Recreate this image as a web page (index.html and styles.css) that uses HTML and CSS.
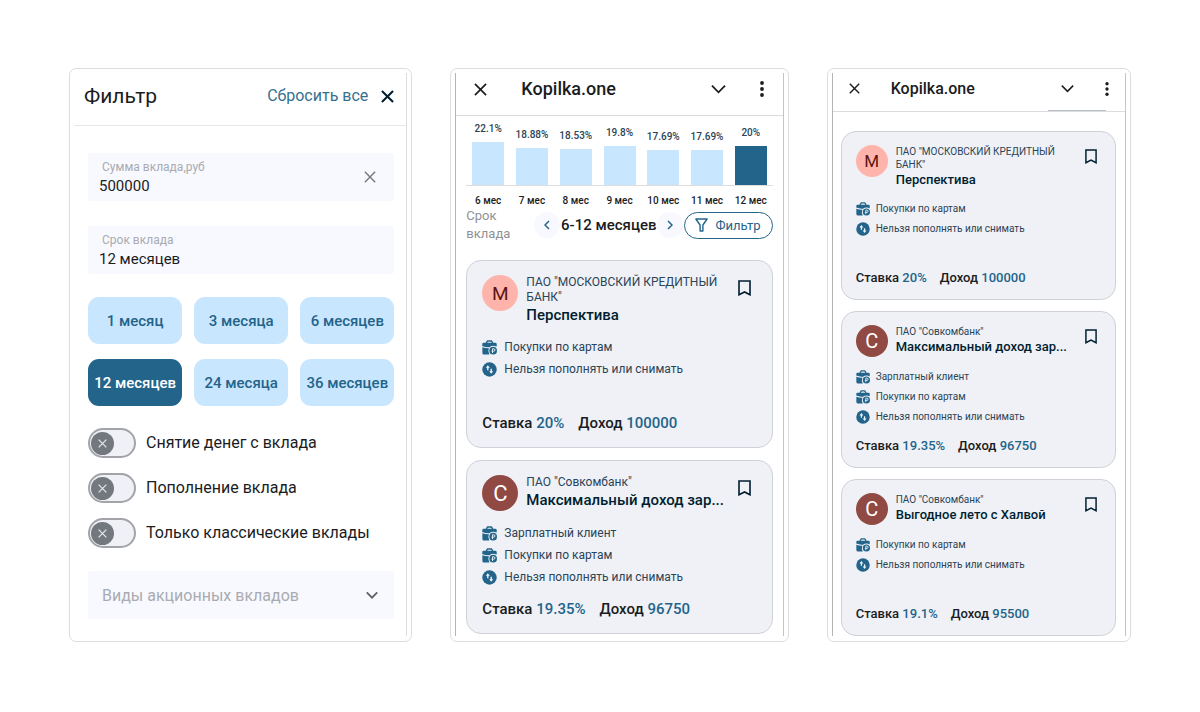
FILE: index.html
```html
<!DOCTYPE html>
<html lang="ru">
<head>
<meta charset="utf-8">
<meta name="viewport" content="width=device-width, initial-scale=1">
<title>Kopilka.one</title>
<link rel="stylesheet" href="styles.css">
</head>
<body>
<svg class="sprite" aria-hidden="true">
  <symbol id="i-close" viewBox="0 0 14 14"><path d="M1 1l12 12M13 1L1 13" fill="none" stroke="currentColor"/></symbol>
  <symbol id="i-down" viewBox="0 0 16 10"><path d="M1 1.5l7 7 7-7" fill="none" stroke="currentColor"/></symbol>
  <symbol id="i-dots" viewBox="0 0 4 16"><g fill="currentColor"><circle cx="2" cy="2" r="1.9"/><circle cx="2" cy="8" r="1.9"/><circle cx="2" cy="14" r="1.9"/></g></symbol>
  <symbol id="i-left" viewBox="0 0 6 10"><path d="M5 1L1 5l4 4" fill="none" stroke="currentColor" stroke-width="1.5"/></symbol>
  <symbol id="i-right" viewBox="0 0 6 10"><path d="M1 1l4 4-4 4" fill="none" stroke="currentColor" stroke-width="1.5"/></symbol>
  <symbol id="i-funnel" viewBox="0 0 13 14"><path d="M.9 1h11.2L7.9 7v6H5.1V7z" fill="none" stroke="currentColor" stroke-width="1.4" stroke-linejoin="round"/></symbol>
  <symbol id="i-mark" viewBox="0 0 13 16"><path d="M1 1h11v13.8L6.500 12 1 14.800z" fill="none" stroke="currentColor" stroke-width="1.6"/></symbol>
  <symbol id="i-bag" viewBox="0 0 16 16">
    <path d="M4.500 3.200L6 1h4l1.500 2.200" fill="none" stroke="currentColor" stroke-width="1.500"/>
    <path d="M1.800 3h12.400q1.500 0 1.500 1.500V7Q11 5.200 8 7.600 4 8 .3 6.400V4.500Q.3 3 1.800 3z" fill="currentColor"/>
    <path d="M.4 7.600Q4 9 7.300 8.800q-1.400 3.400.5 6.600H2Q.4 15.400.4 13.800z" fill="currentColor"/>
    <circle cx="11.900" cy="11.400" r="4.100" fill="currentColor"/>
    <path d="M11.200 13.900V9.300h1.300a1.300 1.300 0 0 1 0 2.600h-2.300" fill="none" stroke="#eff1f6" stroke-width="1"/>
  </symbol>
  <symbol id="i-swap" viewBox="0 0 16 16">
    <circle cx="8" cy="8" r="7.700" fill="currentColor"/>
    <path d="M6.200 8.800V5M9.800 7.200v4" fill="none" stroke="#eff1f6" stroke-width="1.500"/>
    <path d="M4 6.200L6.200 3.500 8.400 6.200zM7.600 9.800L9.800 12.500 12 9.800z" fill="#eff1f6"/>
  </symbol>
</svg>

<main class="gallery">
  <section class="panel">
    <form class="screen screen-filter">
      <header class="filter-head">
        <h1 class="filter-title">Фильтр</h1>
        <button class="reset" type="reset">Сбросить все</button>
        <button class="icon-btn" type="button" aria-label="Закрыть"><svg class="x-bold"><use href="#i-close"/></svg></button>
      </header>
      <div class="filter-body">
        <div class="field">
          <div class="field-text">
            <label class="field-label" for="sum">Сумма вклада,руб</label>
            <input class="field-input" id="sum" type="text" value="500000">
          </div>
          <button class="icon-btn muted" type="button" aria-label="Очистить"><svg class="x-clear"><use href="#i-close"/></svg></button>
        </div>
        <div class="field field-term">
          <div class="field-text">
            <label class="field-label" for="term">Срок вклада</label>
            <input class="field-input" id="term" type="text" value="12 месяцев">
          </div>
        </div>
        <div class="chips">
          <button class="chip" type="button">1 месяц</button>
          <button class="chip" type="button">3 месяца</button>
          <button class="chip" type="button">6 месяцев</button>
          <button class="chip chip-on" type="button">12 месяцев</button>
          <button class="chip" type="button">24 месяца</button>
          <button class="chip" type="button">36 месяцев</button>
        </div>
        <div class="switches">
          <label class="switch-row"><span class="switch"><input class="switch-input" type="checkbox"><svg class="switch-x"><use href="#i-close"/></svg></span>Снятие денег с вклада</label>
          <label class="switch-row"><span class="switch"><input class="switch-input" type="checkbox"><svg class="switch-x"><use href="#i-close"/></svg></span>Пополнение вклада</label>
          <label class="switch-row"><span class="switch"><input class="switch-input" type="checkbox"><svg class="switch-x"><use href="#i-close"/></svg></span>Только классические вклады</label>
        </div>
        <div class="picker">
          <select class="picker-select" aria-label="Виды акционных вкладов"><option>Виды акционных вкладов</option></select>
          <svg class="picker-arrow"><use href="#i-down"/></svg>
        </div>
      </div>
    </form>
  </section>

  <section class="panel">
    <div class="screen screen-app">
      <header class="app-head">
        <button class="icon-btn" type="button" aria-label="Закрыть"><svg class="x-app"><use href="#i-close"/></svg></button>
        <h2 class="app-title">Kopilka.one</h2>
        <button class="icon-btn" type="button" aria-label="Свернуть"><svg class="down-app"><use href="#i-down"/></svg></button>
        <button class="icon-btn" type="button" aria-label="Меню"><svg class="dots"><use href="#i-dots"/></svg></button>
      </header>
      <div class="app-body">
        <div class="chart">
          <div class="col">22.1%<span class="bar" style="height:43px"></span></div>
          <div class="col">18.88%<span class="bar" style="height:37px"></span></div>
          <div class="col">18.53%<span class="bar" style="height:36px"></span></div>
          <div class="col">19.8%<span class="bar" style="height:39px"></span></div>
          <div class="col">17.69%<span class="bar" style="height:35px"></span></div>
          <div class="col">17.69%<span class="bar" style="height:35px"></span></div>
          <div class="col">20%<span class="bar bar-on" style="height:39px"></span></div>
        </div>
        <div class="months">
          <span>6 мес</span><span>7 мес</span><span>8 мес</span><span>9 мес</span><span>10 мес</span><span>11 мес</span><span>12 мес</span>
        </div>
        <div class="range">
          <span class="range-label">Срок вклада</span>
          <button class="round" type="button" aria-label="Назад"><svg class="arrow"><use href="#i-left"/></svg></button>
          <span class="range-value">6-12 месяцев</span>
          <button class="round" type="button" aria-label="Вперёд"><svg class="arrow"><use href="#i-right"/></svg></button>
          <button class="pill" type="button"><svg class="funnel"><use href="#i-funnel"/></svg>Фильтр</button>
        </div>
        <div class="cards">
          <article class="card">
            <div class="card-head">
              <span class="avatar avatar-m">М</span>
              <div class="names"><p class="bank">ПАО "МОСКОВСКИЙ КРЕДИТНЫЙ БАНК"</p><h3 class="deposit">Перспектива</h3></div>
              <button class="icon-btn mark-btn" type="button" aria-label="В закладки"><svg class="mark"><use href="#i-mark"/></svg></button>
            </div>
            <ul class="features">
              <li class="feature"><svg class="ficon"><use href="#i-bag"/></svg>Покупки по картам</li>
              <li class="feature"><svg class="ficon"><use href="#i-swap"/></svg>Нельзя пополнять или снимать</li>
            </ul>
            <p class="totals"><span>Ставка <b class="num">20%</b></span><span>Доход <b class="num">100000</b></span></p>
          </article>
          <article class="card">
            <div class="card-head">
              <span class="avatar avatar-c">С</span>
              <div class="names"><p class="bank">ПАО "Совкомбанк"</p><h3 class="deposit">Максимальный доход зар...</h3></div>
              <button class="icon-btn mark-btn" type="button" aria-label="В закладки"><svg class="mark"><use href="#i-mark"/></svg></button>
            </div>
            <ul class="features">
              <li class="feature"><svg class="ficon"><use href="#i-bag"/></svg>Зарплатный клиент</li>
              <li class="feature"><svg class="ficon"><use href="#i-bag"/></svg>Покупки по картам</li>
              <li class="feature"><svg class="ficon"><use href="#i-swap"/></svg>Нельзя пополнять или снимать</li>
            </ul>
            <p class="totals"><span>Ставка <b class="num">19.35%</b></span><span>Доход <b class="num">96750</b></span></p>
          </article>
        </div>
      </div>
    </div>
  </section>

  <section class="panel compact">
    <div class="screen screen-app">
      <header class="app-head">
        <button class="icon-btn" type="button" aria-label="Закрыть"><svg class="x-app"><use href="#i-close"/></svg></button>
        <h2 class="app-title">Kopilka.one</h2>
        <button class="icon-btn" type="button" aria-label="Свернуть"><svg class="down-app"><use href="#i-down"/></svg></button>
        <button class="icon-btn" type="button" aria-label="Меню"><svg class="dots"><use href="#i-dots"/></svg></button>
      </header>
      <div class="app-body">
        <div class="cards">
          <article class="card">
            <div class="card-head">
              <span class="avatar avatar-m">М</span>
              <div class="names"><p class="bank">ПАО "МОСКОВСКИЙ КРЕДИТНЫЙ БАНК"</p><h3 class="deposit">Перспектива</h3></div>
              <button class="icon-btn mark-btn" type="button" aria-label="В закладки"><svg class="mark"><use href="#i-mark"/></svg></button>
            </div>
            <ul class="features">
              <li class="feature"><svg class="ficon"><use href="#i-bag"/></svg>Покупки по картам</li>
              <li class="feature"><svg class="ficon"><use href="#i-swap"/></svg>Нельзя пополнять или снимать</li>
            </ul>
            <p class="totals"><span>Ставка <b class="num">20%</b></span><span>Доход <b class="num">100000</b></span></p>
          </article>
          <article class="card">
            <div class="card-head">
              <span class="avatar avatar-c">С</span>
              <div class="names"><p class="bank">ПАО "Совкомбанк"</p><h3 class="deposit">Максимальный доход зар...</h3></div>
              <button class="icon-btn mark-btn" type="button" aria-label="В закладки"><svg class="mark"><use href="#i-mark"/></svg></button>
            </div>
            <ul class="features">
              <li class="feature"><svg class="ficon"><use href="#i-bag"/></svg>Зарплатный клиент</li>
              <li class="feature"><svg class="ficon"><use href="#i-bag"/></svg>Покупки по картам</li>
              <li class="feature"><svg class="ficon"><use href="#i-swap"/></svg>Нельзя пополнять или снимать</li>
            </ul>
            <p class="totals"><span>Ставка <b class="num">19.35%</b></span><span>Доход <b class="num">96750</b></span></p>
          </article>
          <article class="card">
            <div class="card-head">
              <span class="avatar avatar-c">С</span>
              <div class="names"><p class="bank">ПАО "Совкомбанк"</p><h3 class="deposit">Выгодное лето с Халвой</h3></div>
              <button class="icon-btn mark-btn" type="button" aria-label="В закладки"><svg class="mark"><use href="#i-mark"/></svg></button>
            </div>
            <ul class="features">
              <li class="feature"><svg class="ficon"><use href="#i-bag"/></svg>Покупки по картам</li>
              <li class="feature"><svg class="ficon"><use href="#i-swap"/></svg>Нельзя пополнять или снимать</li>
            </ul>
            <p class="totals"><span>Ставка <b class="num">19.1%</b></span><span>Доход <b class="num">95500</b></span></p>
          </article>
        </div>
      </div>
    </div>
  </section>
</main>
</body>
</html>
```
FILE: styles.css
```css
* { box-sizing: border-box; }

:root {
  --ink: #1a1c1e;
  --navy: #001e2f;
  --slate: #2b4456;
  --blue: #23648a;
  --sky: #c9e6ff;
  --pale: #f8f9ff;
  --card: #eff1f6;
  --line: #dddddd;
}

body {
  margin: 0;
  background: #ffffff;
  color: var(--ink);
  font-family: Roboto, "Noto Sans", sans-serif;
}

h1, h2, h3, p, ul { margin: 0; padding: 0; font-weight: 400; }
ul { list-style: none; }
svg { display: block; flex: none; }
button, input, select { font: inherit; color: inherit; border: 0; padding: 0; background: none; }
.sprite { position: absolute; width: 0; height: 0; }

.gallery {
  display: grid;
  grid-template-columns: 343fr 338fr 304fr;
  gap: 38px;
  padding: 68px 69px;
  align-items: stretch;
}

.panel {
  display: grid;
  min-width: 0;
  padding: 4px 4px 5px;
  border: 1px solid var(--line);
  border-radius: 7px;
}
.screen { min-width: 0; border-right: 1px solid var(--line); }
.screen-app { border-right-color: #c4c4c4; border-left: 1px solid #b4b4b4; }

.icon-btn { display: grid; place-items: center; flex: none; }
.muted { color: #74777c; }

/* Filter form */
.filter-head {
  display: flex;
  align-items: center;
  height: 53px;
  padding: 0 12px 6px 10px;
  border-bottom: 1px solid #e6e6e6;
}
.filter-title { flex: 1; font-size: 21px; line-height: 26px; }
.reset { margin-right: 13px; font-size: 16px; line-height: 20px; color: #36708f; }
.x-bold { width: 13px; height: 13px; stroke-width: 2.2; color: var(--navy); }

.filter-body { padding: 27px 12px 17px 14px; }
.field {
  display: flex;
  align-items: center;
  justify-content: space-between;
  height: 48px;
  padding: 0 18px 0 11px;
  border-radius: 3px;
  background: var(--pale);
}
.field-term { margin-top: 25px; }
.field-text { display: grid; flex: 1; min-width: 0; }
.field-label { padding-left: 3px; font-size: 12px; line-height: 18px; color: #a9abb0; }
.field-input { width: 100%; height: 20px; font-size: 15px; line-height: 20px; }
.x-clear { width: 12px; height: 12px; stroke-width: 1.6; }

.chips {
  display: grid;
  grid-template-columns: repeat(3, 1fr);
  gap: 15px 12px;
  margin-top: 23px;
}
.chip {
  height: 47px;
  border-radius: 11px;
  background: var(--sky);
  color: var(--blue);
  font-size: 15px;
  font-weight: 500;
  white-space: nowrap;
}
.chip-on { background: var(--blue); color: #ffffff; }

.switches { display: grid; gap: 15px; margin-top: 22px; }
.switch-row { display: flex; align-items: center; gap: 10px; font-size: 16px; line-height: 20px; }
.switch { display: grid; align-items: center; flex: none; }
.switch-input {
  grid-area: 1 / 1;
  display: flex;
  align-items: center;
  width: 48px;
  height: 30px;
  margin: 0;
  padding-left: 1px;
  border: 2px solid #a2a4aa;
  border-radius: 15px;
  background: var(--card);
  appearance: none;
}
.switch-input::before {
  content: "";
  width: 23px;
  height: 23px;
  border-radius: 50%;
  background: #72787e;
}
.switch-x {
  grid-area: 1 / 1;
  width: 9px;
  height: 9px;
  margin-left: 10px;
  color: #e4e6ea;
  stroke-width: 2;
  pointer-events: none;
}

.picker { display: grid; align-items: center; margin-top: 23px; }
.picker-select {
  grid-area: 1 / 1;
  width: 100%;
  height: 48px;
  padding: 0 40px 0 14px;
  border-radius: 3px;
  background: var(--pale);
  color: #a9abb0;
  font-size: 16px;
  appearance: none;
}
.picker-arrow {
  grid-area: 1 / 1;
  justify-self: end;
  width: 12px;
  height: 8px;
  margin-right: 16px;
  color: #5d6065;
  stroke-width: 2.4;
  pointer-events: none;
}

/* App screens */
.app-head {
  display: flex;
  align-items: center;
  height: 43px;
  padding: 0 19px 10px 18px;
  border-bottom: 1px solid #dcdcdc;
}
.x-app { width: 13px; height: 13px; stroke-width: 1.8; }
.app-title { flex: 1; margin-left: 34px; font-size: 18px; font-weight: 500; line-height: 22px; }
.down-app { width: 15px; height: 10px; margin-right: 34px; stroke-width: 1.9; }
.dots { width: 4px; height: 16px; }
.app-body { padding: 6px 10px 0; }

.chart, .months {
  display: grid;
  grid-template-columns: repeat(7, 1fr);
  color: var(--slate);
  font-size: 10px;
  font-weight: 500;
  text-align: center;
}
.chart { align-items: end; border-bottom: 1px solid var(--line); line-height: 14px; }
.col { display: grid; justify-items: center; gap: 6px; }
.bar { width: 32px; background: var(--sky); }
.bar-on { background: var(--blue); }
.months { padding-top: 9px; line-height: 12px; color: var(--ink); }

.range { display: flex; align-items: center; }
.range-label { width: min-content; margin-right: auto; font-size: 13px; line-height: 18px; color: #8f9195; }
.round {
  display: grid;
  place-items: center;
  width: 26px;
  height: 26px;
  border-radius: 50%;
  background: var(--pale);
  color: var(--blue);
}
.arrow { width: 6px; height: 10px; }
.range-value { margin: 0 1px; font-size: 15px; font-weight: 500; line-height: 20px; white-space: nowrap; }
.pill {
  display: flex;
  align-items: center;
  gap: 7px;
  height: 27px;
  margin-left: 1px;
  padding: 0 11px 0 10px;
  border: 1px solid var(--blue);
  border-radius: 14px;
  color: var(--blue);
  font-size: 13px;
}
.funnel { width: 13px; height: 14px; }

.cards { display: grid; gap: 12px; margin-top: 17px; }
.card {
  min-width: 0;
  padding: 14px 15px 13px;
  border: 1px solid #cfd1d8;
  border-radius: 15px;
  background: var(--card);
}
.card-head { display: flex; align-items: flex-start; }
.avatar {
  display: grid;
  place-items: center;
  flex: none;
  width: 36px;
  height: 36px;
  border-radius: 50%;
  font-size: 19px;
}
.avatar-m { background: #ffb4ab; color: #5c1512; }
.avatar-c { background: #904a43; color: #ffffff; font-size: 22px; }
.names { flex: 1; min-width: 0; margin: 0 12px 0 8px; }
.bank { font-size: 12px; line-height: 15px; color: var(--slate); }
.deposit {
  overflow: hidden;
  color: var(--navy);
  font-size: 15px;
  font-weight: 500;
  line-height: 20px;
  text-overflow: ellipsis;
  white-space: nowrap;
}
.mark-btn { margin: 5px 6px 0 0; color: var(--navy); }
.mark { width: 13px; height: 16px; }

.features { min-height: 66px; margin-top: 11px; }
.feature {
  display: flex;
  align-items: center;
  gap: 7px;
  color: var(--slate);
  font-size: 12px;
  line-height: 22px;
}
.ficon { width: 15px; height: 15px; color: var(--blue); }
.totals { display: flex; gap: 14px; margin-top: 10px; font-size: 15px; font-weight: 500; line-height: 22px; }
.num { color: var(--blue); font-weight: 500; }

/* Denser variant of the app screen */
.compact .app-head {
  height: 39px;
  padding: 0 16px 7px 16px;
  background: linear-gradient(#b9c0cc, #b9c0cc) no-repeat right 19px bottom / 58px 1px;
}
.compact .x-app { width: 11px; height: 11px; }
.compact .app-title { margin-left: 31px; font-size: 16px; }
.compact .down-app { width: 13px; height: 9px; margin-right: 31px; }
.compact .dots { height: 14px; }
.compact .app-body { padding: 19px 9px 0 8px; }
.compact .cards { gap: 11px; margin-top: 0; }
.compact .card { padding: 13px 14px 11px; }
.compact .avatar { width: 32px; height: 32px; font-size: 17px; }
.compact .avatar-c { font-size: 20px; }
.compact .bank { font-size: 10px; line-height: 13px; }
.compact .deposit { font-size: 13px; line-height: 18px; }
.compact .mark-btn { margin: 4px 4px 0 0; }
.compact .mark { width: 12px; height: 15px; }
.compact .features { min-height: 60px; margin-top: 10px; }
.compact .feature { gap: 6px; font-size: 10px; line-height: 20px; }
.compact .ficon { width: 14px; height: 14px; }
.compact .totals { gap: 13px; margin-top: 9px; font-size: 13px; line-height: 20px; }
```
